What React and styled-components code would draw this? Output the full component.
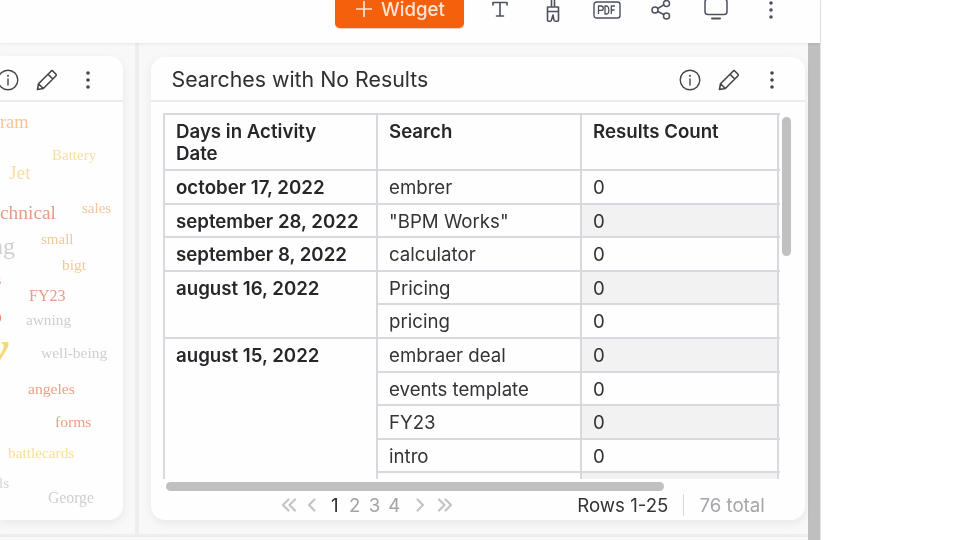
import React from "react";
import styled, { createGlobalStyle } from "styled-components";

const Global = createGlobalStyle`
  html, body { margin: 0; padding: 0; background: #fff; height: 100%; overflow: hidden; }
  #root { height: 100%; }
`;

const Page = styled.div`
  width: 960px; height: 540px; overflow: hidden; display: flex; background: #fefefe;
  font-family: Inter, "Liberation Sans", sans-serif; color: #2b2b2f; filter: blur(0.35px);
`;
const Main = styled.div`
  width: 821px; height: 540px; display: flex; flex-direction: column;
  border-right: 1px solid #e4e4e6; box-sizing: border-box;
`;
const TopBar = styled.header`
  height: 43px; flex: none; background: #fefefe; display: flex; align-items: flex-start;
  padding-left: 335px; box-shadow: 0 1px 3px rgba(0,0,0,.07); position: relative; z-index: 2;
`;
const AddButton = styled.button`
  width: 129px; height: 38px; margin-top: -10px; border: 0; border-radius: 5px; background: #f4600c;
  color: #fbe6d8; font: 500 18.67px Inter, sans-serif; display: flex; align-items: center; justify-content: center;
  gap: 9px; padding: 0 0 0 2px; box-shadow: 0 1px 1px rgba(200,80,0,.3);
`;
const ToolIcon = styled.span`
  display: flex; justify-content: center; width: ${p => p.$w}px; margin-left: ${p => p.$gap}px; margin-top: ${p => p.$top}px;
  color: #4c5060; svg { display: block; }
`;
const Body = styled.div`
  flex: 1; min-height: 0; display: flex; background: #f8f8f8;
`;
const Content = styled.div`
  flex: 1; min-width: 0; display: flex; flex-direction: column;
`;
const Panes = styled.div`
  height: 491px; flex: none; display: flex;
`;
const BottomBand = styled.div`
  height: 3px; flex: none; background: #eeeeef;
`;
const LeftPane = styled.div`
  width: 135px; flex: none; padding-top: 13px; box-sizing: border-box;
`;
const Gutter = styled.div`
  width: 4px; flex: none; background: #eeeeef;
`;
const RightPane = styled.div`
  flex: 1; min-width: 0; display: flex; padding: 14px 3px 0 12px; box-sizing: border-box;
`;
const ScrollRail = styled.div`
  width: 12px; flex: none; background: #bfbfbf;
`;
const Card = styled.section`
  background: #fefefe; box-shadow: 0 3px 10px rgba(0,0,0,.07); display: flex; flex-direction: column;
  overflow: hidden; border-radius: ${p => p.$clip ? "0 14px 14px 0" : "14px"};
  width: ${p => p.$clip ? "123px" : "654px"}; height: ${p => p.$clip ? "464px" : "463px"};
  flex: none; position: relative;
`;
const CardHead = styled.div`
  height: 45px; flex: none; display: flex; align-items: center; box-sizing: border-box;
  border-bottom: 2px solid #ececee; padding: ${p => p.$clip ? "2px 0 0 0" : "2px 0 0 20.5px"};
  margin-top: ${p => p.$clip ? "1px" : "0"};
`;
const CardTitle = styled.h2`
  margin: -2px 0 0; flex: 1; font: 400 21.33px Inter, sans-serif; color: #2f2f33;
`;
const HeadIcon = styled.span`
  display: flex; justify-content: center; flex: none; width: ${p => p.$w}px; margin-left: ${p => p.$gap}px; color: #45454b;
`;
const Cloud = styled.div`
  position: relative; flex: 1;
`;
const Word = styled.span`
  position: absolute; left: ${p => p.$x}px; top: ${p => p.$y - 102 - p.$size * 0.58}px; font-family: "Liberation Serif", serif;
  font-size: ${p => p.$size}px; line-height: 1.16; color: ${p => p.$c}; white-space: nowrap; font-style: ${p => p.$it ? "italic" : "normal"};
`;
const TableArea = styled.div`
  flex: 1; min-height: 0; position: relative; padding: 11px 0 0 12px;
`;
const Clip = styled.div`
  width: 617px; height: 366px; overflow: hidden;
`;
const Table = styled.table`
  border-collapse: collapse; table-layout: fixed; width: 654px; font-size: 18.67px; line-height: 22px;
  th, td { border: 2px solid #d8d8de; padding: 0 11px; box-sizing: border-box; vertical-align: top; text-align: left; }
`;
const HeadCell = styled.th`
  font-weight: 600; height: 56px; padding-top: 6px !important; color: #27272b;
`;
const DateCell = styled.td`
  font-weight: 600; padding-top: 6px !important; color: #27272b;
`;
const Cell = styled.td`
  height: 33.6px; padding-top: 6px !important; font-weight: 400; color: #333338;
  background: ${p => p.$shade ? "#f2f2f3" : "transparent"};
`;
const VThumb = styled.div`
  position: absolute; left: 631px; top: 15px; width: 9px; height: 139px; border-radius: 5px; background: #c0c0c0;
`;
const HThumb = styled.div`
  position: absolute; left: 15px; top: 380px; width: 498px; height: 9px; border-radius: 5px; background: #c0c0c0;
`;
const Footer = styled.footer`
  position: absolute; left: 0; right: 0; top: 388px; height: 30px; display: flex; align-items: center; font-size: 18.67px;
  padding-left: 130px;
`;
const Pager = styled.div`
  display: flex; align-items: center; color: #b9b9bd;
`;
const Arrow = styled.span`
  display: flex; width: ${p => p.$w}px; justify-content: center; margin-left: ${p => p.$gap || 0}px; color: #c4c4c8;
`;
const PageNum = styled.span`
  width: 19.8px; text-align: center; color: ${p => p.$on ? "#2b2b2f" : "#a3a3a8"};
  margin-left: ${p => p.$gap || 0}px;
`;
const RowsLabel = styled.span`
  margin-left: 124px; color: #333338; white-space: nowrap;
`;
const Sep = styled.span`
  width: 1px; height: 22px; background: #d8d8dc; margin: 0 15px;
`;
const Total = styled.span`
  color: #a5a5aa; white-space: nowrap;
`;
const Spare = styled.div`flex: 1; background: #fff;`;

const Svg = ({ w, h, vb, sw = 1.6, children }) => (
  <svg width={w} height={h} viewBox={vb || `0 0 ${w} ${h}`} fill="none" stroke="currentColor" strokeWidth={sw} strokeLinecap="round" strokeLinejoin="round">{children}</svg>
);
const Plus = () => <Svg w={16} h={16} sw={1.7}><path d="M8 0.5v15M0.5 8h15" /></Svg>;
const TextIcon = () => <Svg w={18} h={18}><path d="M2 5V2.5h14V5M9 2.5V16M5.5 16h7" /></Svg>;
const Brush = () => <Svg w={14} h={22}><path d="M5.5 0v6M8.5 0v6M2.5 7h9M1.5 7v13c0 .8.5 1.2 1.2 1.2h1.8c.8 0 1-.6 1.2-2L7 15l.8 4.2c.2 1.4.4 2 1.2 2h2.3c.8 0 1.2-.4 1.2-1.2V7M1.5 11.5h11" /></Svg>;
const PdfIcon = () => (
  <svg width="28" height="18" viewBox="0 0 28 18" fill="none">
    <rect x="1" y="1" width="26" height="16" rx="2.5" stroke="currentColor" strokeWidth="1.4" />
    <g stroke="currentColor" strokeWidth="1.3" strokeLinejoin="round">
      <path d="M5.5 13V5h2.6a2 2 0 0 1 0 4.4H5.5" />
      <path d="M12 5v8h1.6c3 0 3-8 0-8H12z" />
      <path d="M22 5h-3.7v8M18.3 9h3.2" />
    </g>
  </svg>
);
const Share = () => <Svg w={20} h={20} sw={1.5}><circle cx="15.5" cy="3.5" r="3" /><circle cx="4" cy="10" r="3" /><circle cx="15.5" cy="16" r="3" /><path d="M6.8 8.5l6-3.6M6.8 11.5l6 3" /></Svg>;
const Monitor = () => <Svg w={24} h={20} sw={1.5}><rect x="1" y="-1" width="22" height="15.5" rx="3" /><path d="M8 18.5h8" strokeWidth="2" /></Svg>;
const Dots = () => <svg width="4" height="18" viewBox="0 0 4 18" fill="currentColor"><circle cx="2" cy="2" r="1.8" /><circle cx="2" cy="9" r="1.8" /><circle cx="2" cy="16" r="1.8" /></svg>;
const Info = () => <Svg w={22} h={22} sw={1.4}><circle cx="11" cy="11" r="9.8" /><path d="M11 10v6" /><path d="M11 6.6v.3" strokeWidth="1.8" /></Svg>;
const Pencil = () => <Svg w={22} h={22} sw={1.6}><path d="M1.5 20.5l1-5.8L15 2.2c.6-.6 1.4-.6 2 0l2.8 2.8c.6.6.6 1.4 0 2L7.3 19.5l-5.8 1zM2.5 14.7l4.8 4.8M12 5.2l4.8 4.8" /></Svg>;
const Dbl = ({ dir }) => <Svg w={16} h={14} sw={2.2}>{dir === "l" ? <path d="M7.5 1.5L2 7l5.5 5.5M14 1.5L8.5 7l5.5 5.5" /> : <path d="M2 1.5L7.5 7 2 12.5M8.5 1.5L14 7l-5.5 5.5" />}</Svg>;
const Sgl = ({ dir }) => <Svg w={9} h={14} sw={2.2}>{dir === "l" ? <path d="M7.5 1.5L2 7l5.5 5.5" /> : <path d="M1.5 1.5L7 7l-5.5 5.5" />}</Svg>;

const words = [
  ["ram", 0, 123, 18.4, "#f6c596"], ["Battery", 52, 156, 15, "#f7dfa3"], ["Jet", 9, 173, 19.5, "#f7dfa3"],
  ["chnical", 0, 213, 19.4, "#ea9b88"], ["sales", 82, 209, 15, "#f3c79b"], ["ng", -9, 247, 24, "#cfcfcf"],
  ["small", 41, 240, 15, "#f3c79b"], ["bigt", 62, 265, 15.5, "#f3c79b"], ["FY23", 29, 296, 16, "#ea9b88"],
  ["s", -5, 280, 16, "#ef7d5e"], ["o", -9, 316, 22, "#f0906a"], ["awning", 26, 320, 15.3, "#cfcfcf"],
  ["well-being", 41, 353, 15.5, "#cfcfcf"], ["y", -19, 350, 62, "#f8d97a", true], ["angeles", 28, 389, 15.6, "#ef9f88"],
  ["forms", 55, 422, 15.6, "#ef9f88"], ["battlecards", 8, 453, 15.3, "#f8e097"], ["ls", -1, 484, 15, "#d4d4d4"],
  ["George", 48, 498, 15.7, "#cfcfcf"],
];

const groups = [
  ["october 17, 2022", ["embrer"]],
  ["september 28, 2022", ['"BPM Works"']],
  ["september 8, 2022", ["calculator"]],
  ["august 16, 2022", ["Pricing", "pricing"]],
  ["august 15, 2022", ["embraer deal", "events template", "FY23", "intro", ""]],
];

export default function App() {
  let idx = 0;
  return (
    <Page>
      <Global />
      <Main>
        <TopBar>
          <AddButton><Plus />Widget</AddButton>
          <ToolIcon $w={18} $gap={27} $top={0}><TextIcon /></ToolIcon>
          <ToolIcon $w={14} $gap={37} $top={0}><Brush /></ToolIcon>
          <ToolIcon $w={28} $gap={33} $top={1}><PdfIcon /></ToolIcon>
          <ToolIcon $w={20} $gap={30} $top={0}><Share /></ToolIcon>
          <ToolIcon $w={24} $gap={33} $top={0}><Monitor /></ToolIcon>
          <ToolIcon $w={4} $gap={41} $top={1}><Dots /></ToolIcon>
        </TopBar>
        <Body>
          <Content>
            <Panes>
              <LeftPane>
                <Card $clip>
                  <CardHead $clip>
                    <HeadIcon $w={22} $gap={-3}><Info /></HeadIcon>
                    <HeadIcon $w={22} $gap={17}><Pencil /></HeadIcon>
                    <HeadIcon $w={4} $gap={28}><Dots /></HeadIcon>
                  </CardHead>
                  <Cloud>
                    {words.map(([t, x, y, s, c, it]) => <Word key={t} $x={x} $y={y} $size={s} $c={c} $it={it}>{t}</Word>)}
                  </Cloud>
                </Card>
              </LeftPane>
              <Gutter />
              <RightPane>
                <Card>
                  <CardHead>
                    <CardTitle>Searches with No Results</CardTitle>
                    <HeadIcon $w={22} $gap={0}><Info /></HeadIcon>
                    <HeadIcon $w={22} $gap={17}><Pencil /></HeadIcon>
                    <HeadIcon $w={4} $gap={30}><Dots /></HeadIcon>
                    <HeadIcon $w={31} $gap={0} />
                  </CardHead>
                  <TableArea>
                    <Clip>
                      <Table>
                        <colgroup><col style={{ width: 213 }} /><col style={{ width: 204 }} /><col style={{ width: 197 }} /><col style={{ width: 40 }} /></colgroup>
                        <thead>
                          <tr><HeadCell>Days in Activity<br />Date</HeadCell><HeadCell>Search</HeadCell><HeadCell>Results Count</HeadCell><HeadCell /></tr>
                        </thead>
                        <tbody>
                          {groups.flatMap(([d, items]) => items.map((s, i) => {
                            const shade = idx++ % 2 === 1;
                            return (
                              <tr key={s || "clipped"}>
                                {i === 0 && <DateCell rowSpan={items.length}>{d}</DateCell>}
                                <Cell>{s}</Cell>
                                <Cell $shade={shade}>{s ? "0" : ""}</Cell>
                                <Cell />
                              </tr>
                            );
                          }))}
                        </tbody>
                      </Table>
                    </Clip>
                    <VThumb />
                    <HThumb />
                    <Footer>
                      <Pager>
                        <Arrow $w={16}><Dbl dir="l" /></Arrow>
                        <Arrow $w={9} $gap={10}><Sgl dir="l" /></Arrow>
                        <PageNum $on $gap={9}>1</PageNum>
                        <PageNum>2</PageNum>
                        <PageNum>3</PageNum>
                        <PageNum>4</PageNum>
                        <Arrow $w={9} $gap={12}><Sgl dir="r" /></Arrow>
                        <Arrow $w={16} $gap={12}><Dbl dir="r" /></Arrow>
                      </Pager>
                      <RowsLabel>Rows 1-25</RowsLabel>
                      <Sep />
                      <Total>76 total</Total>
                    </Footer>
                  </TableArea>
                </Card>
              </RightPane>
            </Panes>
            <BottomBand />
          </Content>
          <ScrollRail />
        </Body>
      </Main>
      <Spare />
    </Page>
  );
}
